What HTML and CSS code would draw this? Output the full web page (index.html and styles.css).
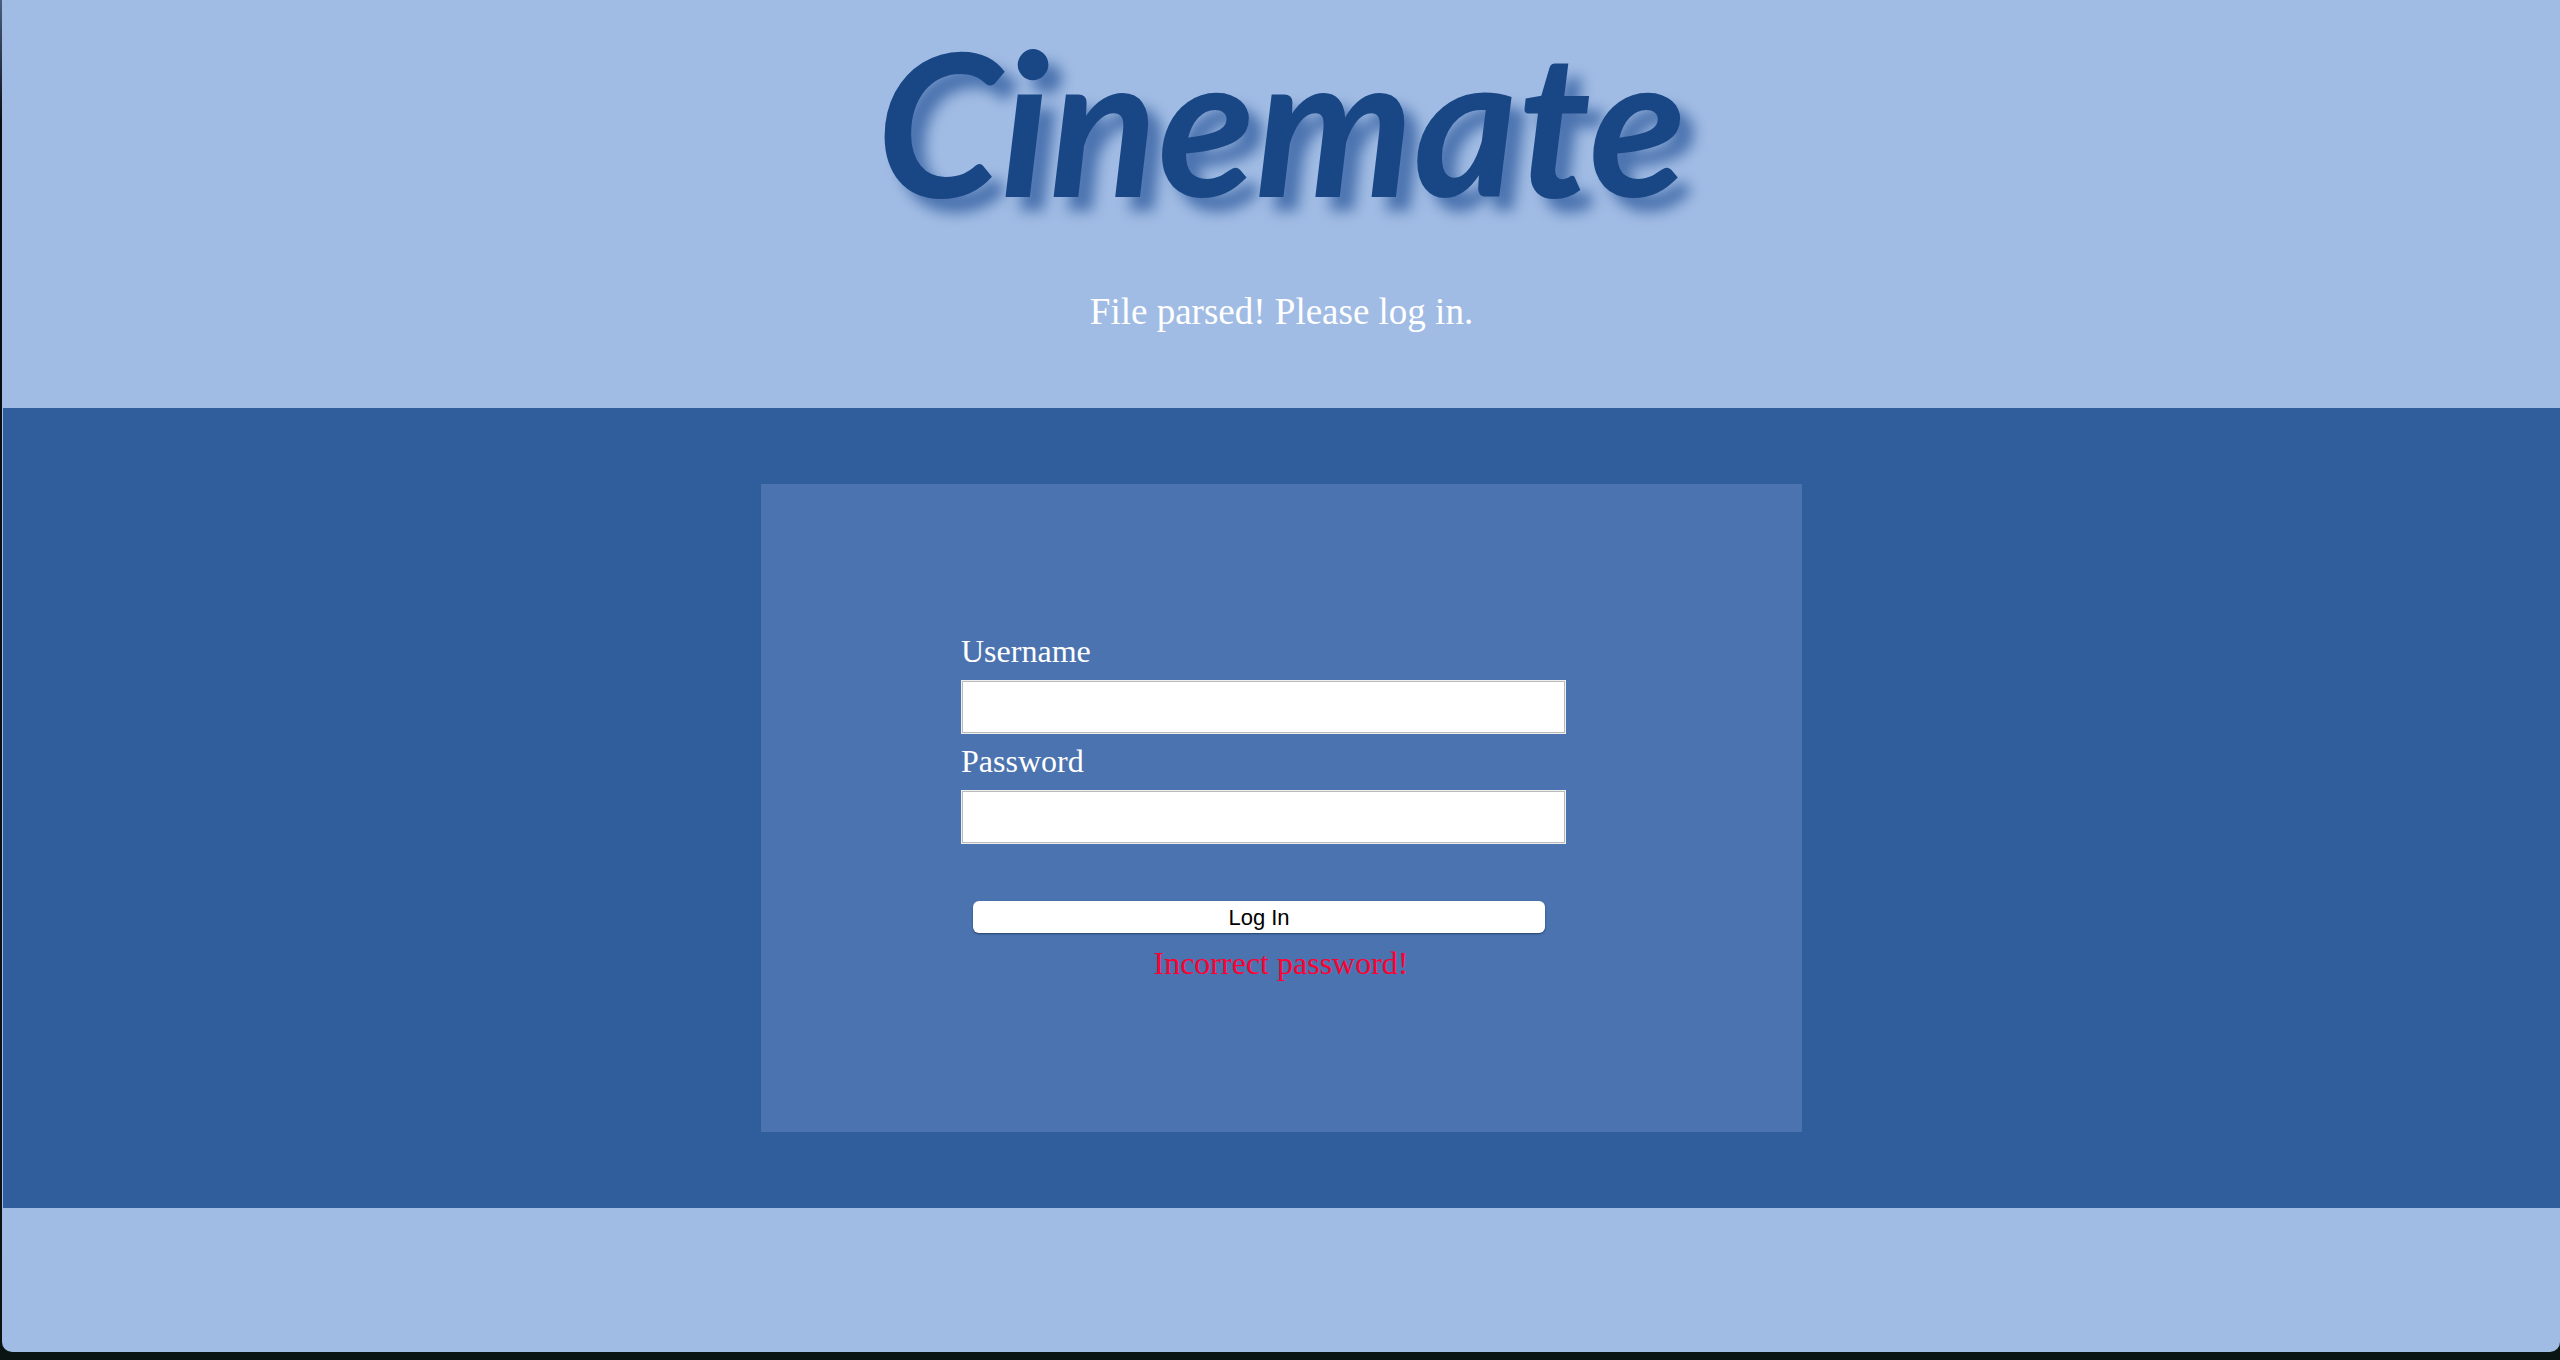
FILE: index.html
```html
<!DOCTYPE html>
<html lang="en">
<head>
<meta charset="utf-8">
<title>Cinemate</title>
<link rel="stylesheet" href="styles.css">
</head>
<body>
<div class="window">
  <header class="header">
    <h1 class="title">Cinemate</h1>
    <p class="message">File parsed! Please log in.</p>
  </header>
  <main class="band">
    <section class="card">
      <form class="form">
        <label class="label" for="username">Username</label>
        <input class="field" id="username" type="text">
        <label class="label" for="password">Password</label>
        <input class="field" id="password" type="password">
        <button class="submit" type="button">Log In</button>
        <p class="error" role="alert">Incorrect password!</p>
      </form>
    </section>
  </main>
</div>
</body>
</html>
```
FILE: styles.css
```css
* {
  box-sizing: border-box;
}

body {
  margin: 0;
  min-height: 100vh;
  display: flex;
  padding: 0 0 8px 2px;
  background: linear-gradient(#4a5f80, #0a0c12 9%, #0a1412);
  color: #fff;
  font-family: "Liberation Serif", "Times New Roman", serif;
  font-size: 32px;
}

.window {
  flex: 1;
  padding-left: 1px;
  background: #a1bce4;
  border-radius: 0 0 10px 10px;
}

.header {
  padding: 4px 0 74px;
  text-align: center;
}

.title {
  margin: 0 0 54px;
  color: #194785;
  font: italic 700 200px/232px Lato, sans-serif;
  text-shadow: 14px 14px 14px #4b73af;
}

.message {
  margin: 0;
  font-size: 37px;
  line-height: 44px;
}

.band {
  padding: 76px 20px;
  background: #305d9b;
}

.card {
  max-width: 1041px;
  margin: 0 auto;
  padding: 148px 201px 150px 200px;
  background: #4b73af;
}

.form {
  display: flex;
  flex-direction: column;
  align-items: flex-start;
}

.label {
  padding-bottom: 10px;
  line-height: 38px;
}

.field {
  width: 100%;
  max-width: 605px;
  height: 54px;
  margin-bottom: 8px;
  padding: 4px 8px;
  border: 1px solid #eee;
  border-radius: 0;
  outline: 1px solid #bbb;
  outline-offset: -2px;
  background: #fff;
  font: inherit;
}

.submit {
  width: 100%;
  max-width: 572px;
  height: 32px;
  margin: 49px 12px 11px;
  padding: 2px 0 0;
  border: 0;
  border-radius: 6px;
  background: #fff;
  box-shadow: 0 1px 2px #24456f;
  color: #000;
  font: 22px/30px "Liberation Sans", Arial, sans-serif;
}

.error {
  margin: 0;
  align-self: center;
  color: #ff0030;
  line-height: 38px;
}
```
